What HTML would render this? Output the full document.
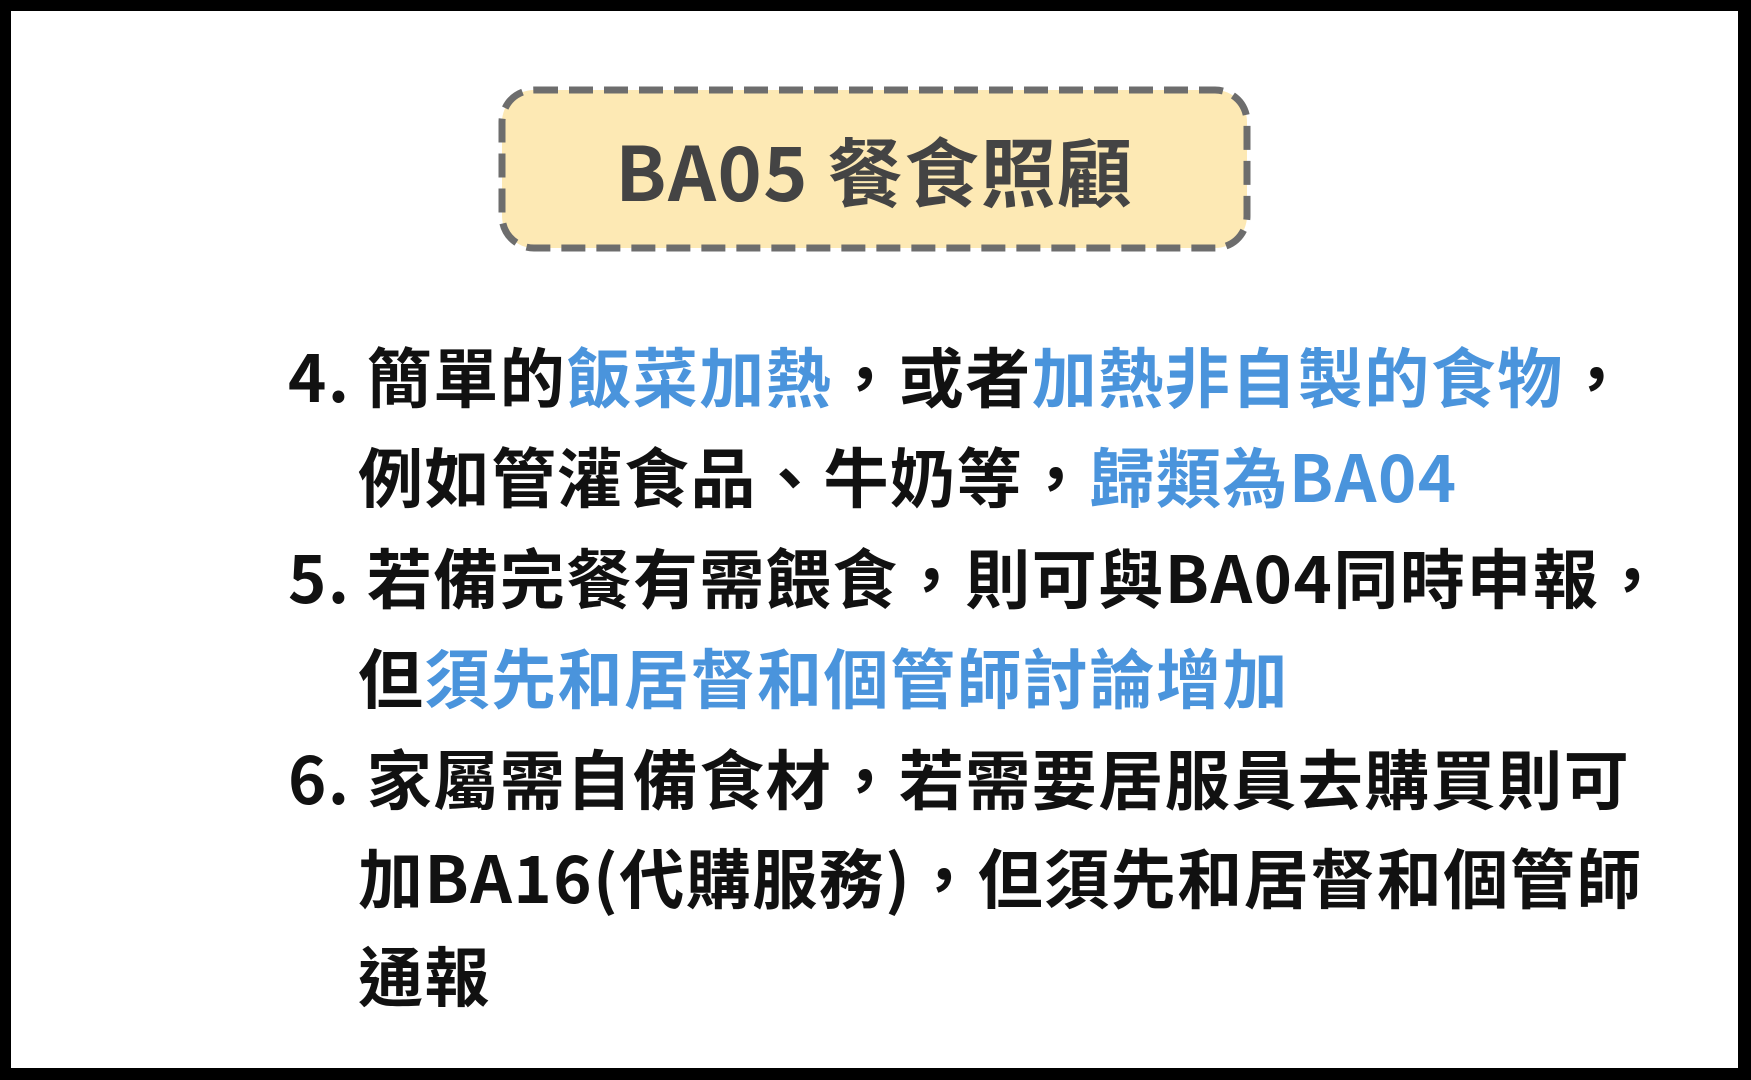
<!DOCTYPE html>
<html><head><meta charset="utf-8"><style>
html,body{margin:0;padding:0}
body{width:1751px;height:1080px;position:relative;background:#000;overflow:hidden;font-family:"Noto Sans CJK TC","Liberation Sans",sans-serif;}
.page{position:absolute;left:11px;top:11px;width:1727px;height:1057px;background:#fff}
svg{position:absolute;left:0;top:0}
.title{position:absolute;left:498px;top:86px;width:753px;height:166px;line-height:166px;text-align:center;font-size:75px;font-weight:bold;color:#444;letter-spacing:1.5px}
.l{position:absolute;white-space:nowrap;font-size:65px;font-weight:bold;color:#111;line-height:100px;letter-spacing:1.5px}
.b{color:#4a94dc}
</style></head><body>
<div class="page"></div>
<svg width="1751" height="1080"><rect x="502" y="90" width="745" height="158" rx="32" fill="#fde9b4" stroke="#6d6d6d" stroke-width="7" stroke-dasharray="24 11"/></svg>
<div class="title">BA05 餐食照顧</div>
<div class="l" style="left:288px;top:324px">4. 簡單的<span class="b">飯菜加熱</span>，或者<span class="b">加熱非自製的食物</span>，</div>
<div class="l" style="left:358px;top:424px">例如管灌食品、牛奶等，<span class="b">歸類為BA04</span></div>
<div class="l" style="left:288px;top:525px">5. 若備完餐有需餵食，則可與BA04同時申報，</div>
<div class="l" style="left:358px;top:625px">但<span class="b">須先和居督和個管師討論增加</span></div>
<div class="l" style="left:288px;top:726px">6. 家屬需自備食材，若需要居服員去購買則可</div>
<div class="l" style="left:358px;top:825px">加BA16(代購服務)，但須先和居督和個管師</div>
<div class="l" style="left:358px;top:923px">通報</div>
</body></html>
